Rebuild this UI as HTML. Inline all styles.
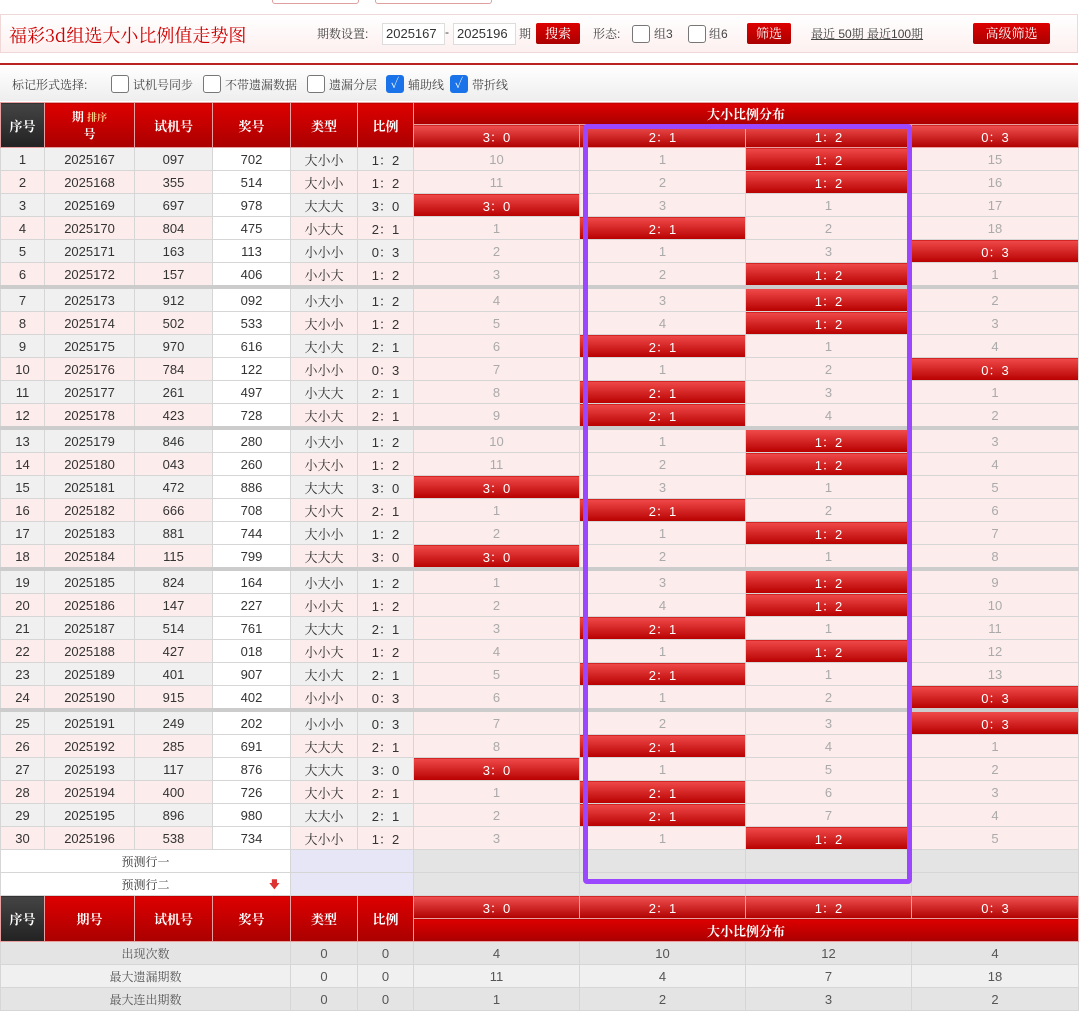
<!DOCTYPE html>
<html><head><meta charset="utf-8"><style>
body{margin:0;width:1080px;height:1006px;overflow:hidden;background:#fff;font-family:"Liberation Sans","Noto Serif CJK SC",serif;font-size:13px;color:#333;position:relative}
.top{position:absolute;left:0;top:14px;width:1076px;height:37px;border:1px solid #f0d8d8;background:linear-gradient(#fff,#fdf0f0)}
.title{position:absolute;left:8px;top:7px;font-family:"Noto Serif CJK SC",serif;font-size:18px;color:#c00}
.t2{position:absolute;top:10px;font-size:12px;color:#444}
.inp{position:absolute;top:8px;height:20px;border:1px solid #ddd;background:#fff;font-size:13px;line-height:20px;padding-left:3px}
.btn{position:absolute;top:8px;height:21px;background:linear-gradient(#d00,#a00);color:#fff;font-size:13px;text-align:center;line-height:21px;border-radius:2px}
.cb{position:absolute;top:10px;width:16px;height:16px;border:1px solid #777;border-radius:3px;background:#fff}
.cbc{background:#1a73e8;border-color:#1a73e8;color:#fff;font-size:13px;line-height:16px;text-align:center}
.redline{position:absolute;left:0;top:63px;width:1078px;height:2px;background:#b22}
.opt{position:absolute;left:0;top:65px;width:1078px;height:36px;background:linear-gradient(#fff,#eee)}
table{position:absolute;left:0;border-collapse:collapse;table-layout:fixed}
td{border:1px solid #d6d6d6;text-align:center;height:22px;padding:0;white-space:nowrap}
.h td{background:linear-gradient(#d00,#a00);color:#fff;font-weight:bold;border-color:#e8a0a0}
.h td.k{background:linear-gradient(#444,#222)}
.sub td.s{background:linear-gradient(#f05050,#b00000);color:#fff;font-weight:normal;height:22px}
tr.o td{background:#f0f0f0}
tr.e td{background:#fdecec}
tr td.w{background:#fff}
tr td.d{background:#fdecec;color:#aaa}
tr td.r{background:linear-gradient(#f04a4a,#b80000);color:#fff}
tr.g td{border-top:4px solid #ccc}
tr.st td{background:#e4e4e4;color:#555}
tr.st2 td{background:#f0f0f0;color:#555}
.pur{position:absolute;left:583px;top:124px;width:319px;height:750px;border:5px solid #9a47ff;border-radius:4px}
</style></head><body>
<div style="position:absolute;left:272px;top:-8px;width:85px;height:10px;border:1px solid #e0a0a0;border-radius:3px"></div>
<div style="position:absolute;left:375px;top:-8px;width:115px;height:10px;border:1px solid #e0a0a0;border-radius:3px"></div>
<div class="top">
<div class="title">福彩3d组选大小比例值走势图</div>
<div class="t2" style="left:316px">期数设置:</div>
<div class="inp" style="left:381px;width:58px">2025167</div>
<div class="t2" style="left:444px">-</div>
<div class="inp" style="left:452px;width:58px">2025196</div>
<div class="t2" style="left:518px">期</div>
<div class="btn" style="left:535px;width:44px">搜索</div>
<div class="t2" style="left:592px">形态:</div>
<div class="cb" style="left:631px"></div><div class="t2" style="left:653px">组3</div>
<div class="cb" style="left:687px"></div><div class="t2" style="left:708px">组6</div>
<div class="btn" style="left:746px;width:44px">筛选</div>
<div class="t2" style="left:810px;text-decoration:underline">最近 50期 最近100期</div>
<div class="btn" style="left:972px;width:77px">高级筛选</div>
</div>
<div class="redline"></div>
<div class="opt">
<div class="t2" style="left:12px;top:11px">标记形式选择:</div>
<div class="cb" style="left:111px;top:10px"></div><div class="t2" style="left:133px;top:11px">试机号同步</div>
<div class="cb" style="left:203px;top:10px"></div><div class="t2" style="left:225px;top:11px">不带遗漏数据</div>
<div class="cb" style="left:307px;top:10px"></div><div class="t2" style="left:329px;top:11px">遗漏分层</div>
<div class="cb cbc" style="left:386px;top:10px">✓</div><div class="t2" style="left:408px;top:11px">辅助线</div>
<div class="cb cbc" style="left:450px;top:10px">✓</div><div class="t2" style="left:472px;top:11px">带折线</div>
</div>
<table style="top:102px;width:1078px">
<colgroup><col style="width:44px"><col style="width:90px"><col style="width:78px"><col style="width:78px"><col style="width:67px"><col style="width:56px"><col style="width:166px"><col style="width:166px"><col style="width:166px"><col style="width:167px"></colgroup>
<tr class="h"><td class="k" rowspan="2">序号</td><td rowspan="2" style="font-size:12px">期 <span style="font-size:10px;color:#fc8">排序</span><br>号</td><td rowspan="2">试机号</td><td rowspan="2">奖号</td><td rowspan="2">类型</td><td rowspan="2">比例</td><td colspan="4" style="height:21px">大小比例分布</td></tr>
<tr class="h sub"><td class="s">3：0</td><td class="s">2：1</td><td class="s">1：2</td><td class="s">0：3</td></tr>
<tr class="o"><td>1</td><td>2025167</td><td>097</td><td class="w">702</td><td>大小小</td><td>1：2</td><td class="d">10</td><td class="d">1</td><td class="r">1：2</td><td class="d">15</td></tr>
<tr class="e"><td>2</td><td>2025168</td><td>355</td><td class="w">514</td><td>大小小</td><td>1：2</td><td class="d">11</td><td class="d">2</td><td class="r">1：2</td><td class="d">16</td></tr>
<tr class="o"><td>3</td><td>2025169</td><td>697</td><td class="w">978</td><td>大大大</td><td>3：0</td><td class="r">3：0</td><td class="d">3</td><td class="d">1</td><td class="d">17</td></tr>
<tr class="e"><td>4</td><td>2025170</td><td>804</td><td class="w">475</td><td>小大大</td><td>2：1</td><td class="d">1</td><td class="r">2：1</td><td class="d">2</td><td class="d">18</td></tr>
<tr class="o"><td>5</td><td>2025171</td><td>163</td><td class="w">113</td><td>小小小</td><td>0：3</td><td class="d">2</td><td class="d">1</td><td class="d">3</td><td class="r">0：3</td></tr>
<tr class="e"><td>6</td><td>2025172</td><td>157</td><td class="w">406</td><td>小小大</td><td>1：2</td><td class="d">3</td><td class="d">2</td><td class="r">1：2</td><td class="d">1</td></tr>
<tr class="o g"><td>7</td><td>2025173</td><td>912</td><td class="w">092</td><td>小大小</td><td>1：2</td><td class="d">4</td><td class="d">3</td><td class="r">1：2</td><td class="d">2</td></tr>
<tr class="e"><td>8</td><td>2025174</td><td>502</td><td class="w">533</td><td>大小小</td><td>1：2</td><td class="d">5</td><td class="d">4</td><td class="r">1：2</td><td class="d">3</td></tr>
<tr class="o"><td>9</td><td>2025175</td><td>970</td><td class="w">616</td><td>大小大</td><td>2：1</td><td class="d">6</td><td class="r">2：1</td><td class="d">1</td><td class="d">4</td></tr>
<tr class="e"><td>10</td><td>2025176</td><td>784</td><td class="w">122</td><td>小小小</td><td>0：3</td><td class="d">7</td><td class="d">1</td><td class="d">2</td><td class="r">0：3</td></tr>
<tr class="o"><td>11</td><td>2025177</td><td>261</td><td class="w">497</td><td>小大大</td><td>2：1</td><td class="d">8</td><td class="r">2：1</td><td class="d">3</td><td class="d">1</td></tr>
<tr class="e"><td>12</td><td>2025178</td><td>423</td><td class="w">728</td><td>大小大</td><td>2：1</td><td class="d">9</td><td class="r">2：1</td><td class="d">4</td><td class="d">2</td></tr>
<tr class="o g"><td>13</td><td>2025179</td><td>846</td><td class="w">280</td><td>小大小</td><td>1：2</td><td class="d">10</td><td class="d">1</td><td class="r">1：2</td><td class="d">3</td></tr>
<tr class="e"><td>14</td><td>2025180</td><td>043</td><td class="w">260</td><td>小大小</td><td>1：2</td><td class="d">11</td><td class="d">2</td><td class="r">1：2</td><td class="d">4</td></tr>
<tr class="o"><td>15</td><td>2025181</td><td>472</td><td class="w">886</td><td>大大大</td><td>3：0</td><td class="r">3：0</td><td class="d">3</td><td class="d">1</td><td class="d">5</td></tr>
<tr class="e"><td>16</td><td>2025182</td><td>666</td><td class="w">708</td><td>大小大</td><td>2：1</td><td class="d">1</td><td class="r">2：1</td><td class="d">2</td><td class="d">6</td></tr>
<tr class="o"><td>17</td><td>2025183</td><td>881</td><td class="w">744</td><td>大小小</td><td>1：2</td><td class="d">2</td><td class="d">1</td><td class="r">1：2</td><td class="d">7</td></tr>
<tr class="e"><td>18</td><td>2025184</td><td>115</td><td class="w">799</td><td>大大大</td><td>3：0</td><td class="r">3：0</td><td class="d">2</td><td class="d">1</td><td class="d">8</td></tr>
<tr class="o g"><td>19</td><td>2025185</td><td>824</td><td class="w">164</td><td>小大小</td><td>1：2</td><td class="d">1</td><td class="d">3</td><td class="r">1：2</td><td class="d">9</td></tr>
<tr class="e"><td>20</td><td>2025186</td><td>147</td><td class="w">227</td><td>小小大</td><td>1：2</td><td class="d">2</td><td class="d">4</td><td class="r">1：2</td><td class="d">10</td></tr>
<tr class="o"><td>21</td><td>2025187</td><td>514</td><td class="w">761</td><td>大大大</td><td>2：1</td><td class="d">3</td><td class="r">2：1</td><td class="d">1</td><td class="d">11</td></tr>
<tr class="e"><td>22</td><td>2025188</td><td>427</td><td class="w">018</td><td>小小大</td><td>1：2</td><td class="d">4</td><td class="d">1</td><td class="r">1：2</td><td class="d">12</td></tr>
<tr class="o"><td>23</td><td>2025189</td><td>401</td><td class="w">907</td><td>大小大</td><td>2：1</td><td class="d">5</td><td class="r">2：1</td><td class="d">1</td><td class="d">13</td></tr>
<tr class="e"><td>24</td><td>2025190</td><td>915</td><td class="w">402</td><td>小小小</td><td>0：3</td><td class="d">6</td><td class="d">1</td><td class="d">2</td><td class="r">0：3</td></tr>
<tr class="o g"><td>25</td><td>2025191</td><td>249</td><td class="w">202</td><td>小小小</td><td>0：3</td><td class="d">7</td><td class="d">2</td><td class="d">3</td><td class="r">0：3</td></tr>
<tr class="e"><td>26</td><td>2025192</td><td>285</td><td class="w">691</td><td>大大大</td><td>2：1</td><td class="d">8</td><td class="r">2：1</td><td class="d">4</td><td class="d">1</td></tr>
<tr class="o"><td>27</td><td>2025193</td><td>117</td><td class="w">876</td><td>大大大</td><td>3：0</td><td class="r">3：0</td><td class="d">1</td><td class="d">5</td><td class="d">2</td></tr>
<tr class="e"><td>28</td><td>2025194</td><td>400</td><td class="w">726</td><td>大小大</td><td>2：1</td><td class="d">1</td><td class="r">2：1</td><td class="d">6</td><td class="d">3</td></tr>
<tr class="o"><td>29</td><td>2025195</td><td>896</td><td class="w">980</td><td>大大小</td><td>2：1</td><td class="d">2</td><td class="r">2：1</td><td class="d">7</td><td class="d">4</td></tr>
<tr class="e"><td>30</td><td>2025196</td><td>538</td><td class="w">734</td><td>大小小</td><td>1：2</td><td class="d">3</td><td class="d">1</td><td class="r">1：2</td><td class="d">5</td></tr>
<tr><td colspan="4" style="background:#fff;font-size:12px">预测行一</td><td colspan="2" style="background:#e6e6f6"></td><td style="background:#e4e4e4"></td><td style="background:#e4e4e4"></td><td style="background:#e4e4e4"></td><td style="background:#e4e4e4"></td></tr>
<tr><td colspan="4" style="background:#fff;font-size:12px;position:relative">预测行二<span style="position:absolute;right:10px;color:#d33;font-size:11px">🡇</span></td><td colspan="2" style="background:#e6e6f6"></td><td style="background:#e4e4e4"></td><td style="background:#e4e4e4"></td><td style="background:#e4e4e4"></td><td style="background:#e4e4e4"></td></tr>
<tr class="h sub"><td class="k" rowspan="2">序号</td><td rowspan="2">期号</td><td rowspan="2">试机号</td><td rowspan="2">奖号</td><td rowspan="2">类型</td><td rowspan="2">比例</td><td class="s">3：0</td><td class="s">2：1</td><td class="s">1：2</td><td class="s">0：3</td></tr>
<tr class="h"><td colspan="4" style="height:22px">大小比例分布</td></tr>
<tr class="st"><td colspan="4" style="font-size:12px">出现次数</td><td>0</td><td>0</td><td>4</td><td>10</td><td>12</td><td>4</td></tr>
<tr class="st2"><td colspan="4" style="font-size:12px">最大遗漏期数</td><td>0</td><td>0</td><td>11</td><td>4</td><td>7</td><td>18</td></tr>
<tr class="st"><td colspan="4" style="font-size:12px">最大连出期数</td><td>0</td><td>0</td><td>1</td><td>2</td><td>3</td><td>2</td></tr>
</table>
<div class="pur"></div>
</body></html>
